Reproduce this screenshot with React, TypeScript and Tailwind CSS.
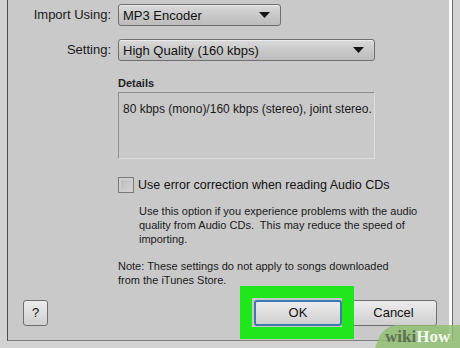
import React from 'react';

const font = { fontFamily: '"Liberation Sans", Arial, sans-serif' };

interface SelectProps {
  value: string;
  className: string;
}

const Select = ({ value, className }: SelectProps) => (
  <div
    className={`flex items-center justify-between h-[22px] rounded-[3px] border border-[#6f6f6f] bg-gradient-to-b from-[#dadada] via-[#c9c9c9] to-[#bcbcbc] pl-[4px] pr-[10px] shadow-[inset_0_1px_0_#ececec] ${className}`}
  >
    <span className="text-[13px] leading-none text-[#111]">{value}</span>
    <svg width="11" height="6" viewBox="0 0 11 6">
      <path d="M0 0h11L5.5 6z" fill="#151515" />
    </svg>
  </div>
);

interface ButtonProps {
  label: string;
  className: string;
}

const Button = ({ label, className }: ButtonProps) => (
  <div
    className={`flex items-center justify-center h-[26px] rounded-[3px] bg-gradient-to-b from-[#ececec] via-[#dedede] to-[#cfcfcf] text-[13px] text-[#111] ${className}`}
  >
    {label}
  </div>
);

export default function App() {
  return (
    <div className="relative w-[460px] h-[348px] overflow-hidden bg-[#d2d2d2]" style={font}>
      {/* dialog panel */}
      <div className="ml-[7px] w-[445px] h-[341px] bg-[#c9c9c9] border-l border-l-[#4d4d4d] border-r-[3px] border-r-[#fafafa] border-b border-b-[#7d7d7d] shadow-[1px_0_0_#6a6a6a]">
        <div className="flex flex-col pt-[4px]">
          {/* Import Using */}
          <div className="flex items-center">
            <div className="w-[103px] text-right text-[13px] text-[#1a1a1a]">Import Using:</div>
            <Select value="MP3 Encoder" className="ml-[7px] w-[163px]" />
          </div>

          {/* Setting */}
          <div className="flex items-center mt-[13px]">
            <div className="w-[103px] text-right text-[13px] text-[#1a1a1a]">Setting:</div>
            <Select value="High Quality (160 kbps)" className="ml-[7px] w-[257px]" />
          </div>

          {/* Details */}
          <div className="ml-[110px] mt-[16px] w-[257px]">
            <div className="text-[11px] font-bold leading-[13px] text-[#222]">Details</div>
            <div className="mt-[2px] h-[67px] border-t border-l border-t-[#8e8e8e] border-l-[#8e8e8e] border-r border-b border-r-[#dedede] border-b-[#dedede] px-[4px] pt-[7px] text-[12px] whitespace-nowrap text-[#1a1a1a]">
              80 kbps (mono)/160 kbps (stereo), joint stereo.
            </div>
          </div>

          {/* error correction */}
          <div className="ml-[110px] mt-[17px] flex items-center">
            <div className="w-[16px] h-[16px] border border-[#7b7b7b] bg-gradient-to-br from-[#b9b9b9] to-[#d6d6d6] shadow-[inset_0_0_0_2px_#cfcfcf]" />
            <span className="ml-[4px] text-[12.5px] text-[#111]">Use error correction when reading Audio CDs</span>
          </div>

          <div className="ml-[131px] mt-[9px] text-[11px] leading-[14px] whitespace-nowrap text-[#1a1a1a]">
            Use this option if you experience problems with the audio
            <br />
            quality from Audio CDs.&nbsp; This may reduce the speed of
            <br />
            importing.
          </div>

          <div className="ml-[110px] mt-[13px] text-[11px] leading-[14px] whitespace-nowrap text-[#1a1a1a]">
            Note: These settings do not apply to songs downloaded
            <br />
            from the iTunes Store.
          </div>

          {/* buttons */}
          <div className="flex items-center mt-[13px]">
            <Button label="?" className="ml-[15px] w-[25px] border border-[#6f6f6f]" />
            <Button label="OK" className="ml-[206px] w-[88px] border-2 border-[#3d7ab0]" />
            <Button label="Cancel" className="ml-[8px] w-[87px] border border-[#6f6f6f]" />
          </div>
        </div>
      </div>

      {/* green highlight */}
      <div className="absolute left-[240px] top-[286px] w-[114px] h-[53px] border-[12px] border-[#20e61c]" />

      {/* watermark */}
      <div className="absolute left-[378px] top-[325px] w-[95px] h-[30px] rounded-tl-[14px] bg-[#8fbf6e]/80 skew-x-[-20deg]" />
      <div
        className="absolute left-[385px] top-[326px] text-[17px] font-bold leading-[21px]"
        style={{ fontFamily: '"Liberation Serif", serif' }}
      >
        <span className="text-[#5d6f55]">wiki</span>
        <span className="text-[#f4f8ef]">How</span>
      </div>
    </div>
  );
}
